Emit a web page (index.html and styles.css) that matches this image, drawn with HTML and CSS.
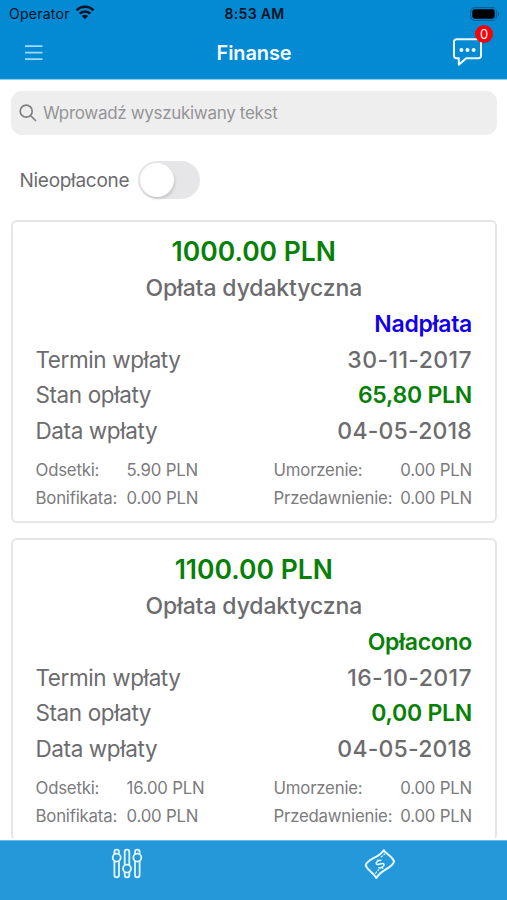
FILE: index.html
```html
<!DOCTYPE html>
<html lang="pl">
<head>
<meta charset="utf-8">
<title>Finanse</title>
<link rel="stylesheet" href="styles.css">
</head>
<body>
<div class="app">
  <header class="header">
    <div class="status">
      <div class="carrier"><span class="operator">Operator</span>
        <svg class="wifi" width="20" height="15" viewBox="0 0 20 15" fill="none" stroke="#00131f" stroke-width="2.5"><path d="M1.5 5.4a12 12 0 0 1 17 0M4.7 8.7a7.5 7.5 0 0 1 10.6 0"/><path d="M10 14.2 6.9 11.1a4.4 4.4 0 0 1 6.2 0z" fill="#00131f" stroke="none"/></svg>
      </div>
      <span class="clock">8:53 AM</span>
      <svg class="battery" width="30" height="14" viewBox="0 0 30 14"><rect x=".7" y=".7" width="25.6" height="12.6" rx="3.8" fill="none" stroke="#06629b" stroke-width="1.2"/><rect x="2.3" y="2.3" width="22.4" height="9.4" rx="2.4" fill="#000"/><path d="M27.7 4.7c2 .8 2 3.8 0 4.6z" fill="#06629b"/></svg>
    </div>
    <div class="nav">
      <svg class="menu" width="18" height="16" viewBox="0 0 18 16" stroke="#9bdcff" stroke-width="1.7"><path d="M0 1.2h17.5M0 7.7h17.5M0 14.2h17.5"/></svg>
      <h1 class="page-title">Finanse</h1>
      <div class="chat">
        <svg width="30" height="29" viewBox="0 0 30 29" fill="none" stroke="#effaff" stroke-width="2" stroke-linejoin="round"><path d="M3.3 1.3h22.4a2.3 2.3 0 0 1 2.3 2.3v14.3a2.3 2.3 0 0 1-2.3 2.3H13.2L5.8 26.8v-6.6H3.3A2.3 2.3 0 0 1 1 17.9V3.6a2.3 2.3 0 0 1 2.3-2.3z"/><g fill="#effaff" stroke="none"><circle cx="8.4" cy="12" r="2"/><circle cx="14.5" cy="12" r="2"/><circle cx="20.6" cy="12" r="2"/></g></svg>
        <span class="badge">0</span>
      </div>
    </div>
  </header>
  <main class="content">
    <div class="search">
      <svg width="18" height="18" viewBox="0 0 18 18" fill="none" stroke="#808083" stroke-width="1.7"><circle cx="7.2" cy="7.2" r="6"/><path d="m11.5 11.5 5 5" stroke-linecap="round"/></svg>
      <span class="placeholder">Wprowadź wyszukiwany tekst</span>
    </div>
    <div class="filter"><span class="filter-label">Nieopłacone</span><span class="switch"><span class="knob"></span></span></div>
    <section class="card">
      <h2 class="amount">1000.00 PLN</h2>
      <h3 class="kind">Opłata dydaktyczna</h3>
      <p class="state over">Nadpłata</p>
      <div class="row"><span class="label">Termin wpłaty</span><span class="value due">30-11-2017</span></div>
      <div class="row"><span class="label">Stan opłaty</span><span class="value money">65,80 PLN</span></div>
      <div class="row"><span class="label">Data wpłaty</span><span class="value">04-05-2018</span></div>
      <div class="details">
        <span>Odsetki:</span><span>5.90 PLN</span><span>Umorzenie:</span><span>0.00 PLN</span>
        <span>Bonifikata:</span><span>0.00 PLN</span><span>Przedawnienie:</span><span>0.00 PLN</span>
      </div>
    </section>
    <section class="card">
      <h2 class="amount">1100.00 PLN</h2>
      <h3 class="kind">Opłata dydaktyczna</h3>
      <p class="state paid">Opłacono</p>
      <div class="row"><span class="label">Termin wpłaty</span><span class="value due">16-10-2017</span></div>
      <div class="row"><span class="label">Stan opłaty</span><span class="value money">0,00 PLN</span></div>
      <div class="row"><span class="label">Data wpłaty</span><span class="value">04-05-2018</span></div>
      <div class="details">
        <span>Odsetki:</span><span>16.00 PLN</span><span>Umorzenie:</span><span>0.00 PLN</span>
        <span>Bonifikata:</span><span>0.00 PLN</span><span>Przedawnienie:</span><span>0.00 PLN</span>
      </div>
    </section>
  </main>
  <footer class="tabs">
    <div class="tab"><svg width="32" height="32" viewBox="0 0 32 32" fill="none" stroke="#e4f7ff" stroke-width="1.8"><path d="M3.4 6V4A2.3 2.3 0 0 1 8 4v2M3.4 13v14A2.3 2.3 0 0 0 8 27V13M13.7 17V4a2.3 2.3 0 0 1 4.6 0v13M13.7 24v3a2.3 2.3 0 0 0 4.6 0v-3M24 6V4a2.3 2.3 0 0 1 4.6 0v2M24 13v14a2.3 2.3 0 0 0 4.6 0V13"/><circle cx="5.7" cy="9.6" r="4"/><circle cx="16" cy="20.6" r="4"/><circle cx="26.3" cy="9.6" r="4"/></svg></div>
    <div class="tab"><svg width="32" height="32" viewBox="0 0 32 32" fill="none" stroke="#e4f7ff" stroke-width="2" stroke-linejoin="round"><path d="M1.7 17.3C3 10.8 15.5 9.7 19.8 2.2c1.4 3.6 7.6 4.5 10.3 11.2C29 20.2 16.5 21.5 12.3 30 9.5 24.2 3.7 22.8 1.7 17.3z"/><g transform="rotate(-32 16 16)"><path d="M19 13.9c-.7-2-6-2-6 .2 0 2.3 6.2 1.5 6.2 3.9 0 2.3-5.7 2.3-6.5.1M16 10.8v1.6M16 19.8v1.6" stroke-width="1.5"/></g><path d="m16.8 9.3 4.3-3.5M11.3 25.6l3.7-4.3" stroke-width="1.1" stroke-dasharray="2.5 1"/></svg></div>
  </footer>
</div>
</body>
</html>
```
FILE: styles.css
```css
* { box-sizing: border-box; }
body { margin: 0; background: #fff; font-family: Inter, "Liberation Sans", sans-serif; color: #6c6c6f; }
h1, h2, h3, p { margin: 0; }
svg { display: block; flex: none; }
.app { height: 900px; display: flex; flex-direction: column; overflow: hidden; }
.header { height: 79px; flex: none; background: #0489d3; box-shadow: 0 1px 0 #8bd0f4; }
.status { height: 27px; display: grid; grid-template-columns: 1fr auto 1fr; align-items: center; padding: 0 7px 0 9px; color: #00131f; }
.carrier { display: flex; align-items: center; gap: 6px; }
.operator { font-size: 14px; letter-spacing: .25px; line-height: 27px; }
.wifi { margin: -2px 0 0 -1px; }
.clock { font-size: 14px; font-weight: 600; letter-spacing: .3px; }
.battery { justify-self: end; }
.nav { height: 52px; display: grid; grid-template-columns: 1fr auto 1fr; align-items: center; padding: 0 24px 0 25px; }
.page-title { font-size: 20px; font-weight: 600; letter-spacing: -.1px; color: #f2fbff; line-height: 50px; }
.chat { justify-self: end; position: relative; margin-top: -2px; }
.badge { position: absolute; right: -10px; top: -13px; width: 18px; height: 18px; border-radius: 50%; background: #fb0007; color: #fff; font-size: 13px; line-height: 18px; text-align: center; }
.content { flex: 1; min-height: 0; overflow: hidden; padding: 12px 10px 0 11px; margin-bottom: 2px; }
.search { height: 44px; border-radius: 11px; background: #eee; display: flex; align-items: center; gap: 6px; padding-left: 8px; color: #949497; }
.placeholder { font-size: 17px; letter-spacing: -.32px; }
.filter { height: 38px; margin: 26px 0 21px 8.5px; display: flex; align-items: center; gap: 9px; }
.filter-label { font-size: 19px; letter-spacing: -.28px; }
.switch { width: 62px; height: 38px; border-radius: 19px; background: #e6e6e9; padding: 2px; }
.knob { display: block; width: 34px; height: 34px; border-radius: 50%; background: #fff; box-shadow: 1px 2px 3px #0002; }
.card { height: 303px; border: 2px solid #e6e6e8; border-radius: 6px; padding: 11px 23px 0 22.5px; margin-bottom: 15px; }
.amount { height: 37px; line-height: 37px; font-size: 26.5px; font-weight: 600; color: #078007; text-align: center; }
.kind { height: 37px; line-height: 37px; font-size: 23px; font-weight: 500; letter-spacing: -.12px; text-align: center; }
.state { height: 35.5px; line-height: 35.5px; font-size: 23px; font-weight: 600; letter-spacing: -.3px; text-align: right; }
.over { color: #1300ea; }
.paid { color: #078007; }
.row { height: 35.5px; line-height: 35px; display: flex; align-items: baseline; justify-content: space-between; font-size: 23px; }
.label { font-size: 22.5px; line-height: 33px; letter-spacing: -.4px; }
.value { font-weight: 500; letter-spacing: .2px; }
.due { letter-spacing: .4px; }
.money { color: #078007; font-weight: 600; letter-spacing: -.25px; }
.details { display: grid; grid-template-columns: 91px 147px 1fr auto; grid-auto-rows: 28px; line-height: 28px; font-size: 16.8px; letter-spacing: -.2px; margin-top: 7px; color: #7b7b7e; }
.tabs { height: 60px; flex: none; background: #2498d8; border-top: 1px solid #68bde8; display: grid; grid-template-columns: 1fr 1fr; }
.tab { display: flex; justify-content: center; padding-top: 7px; }
```
